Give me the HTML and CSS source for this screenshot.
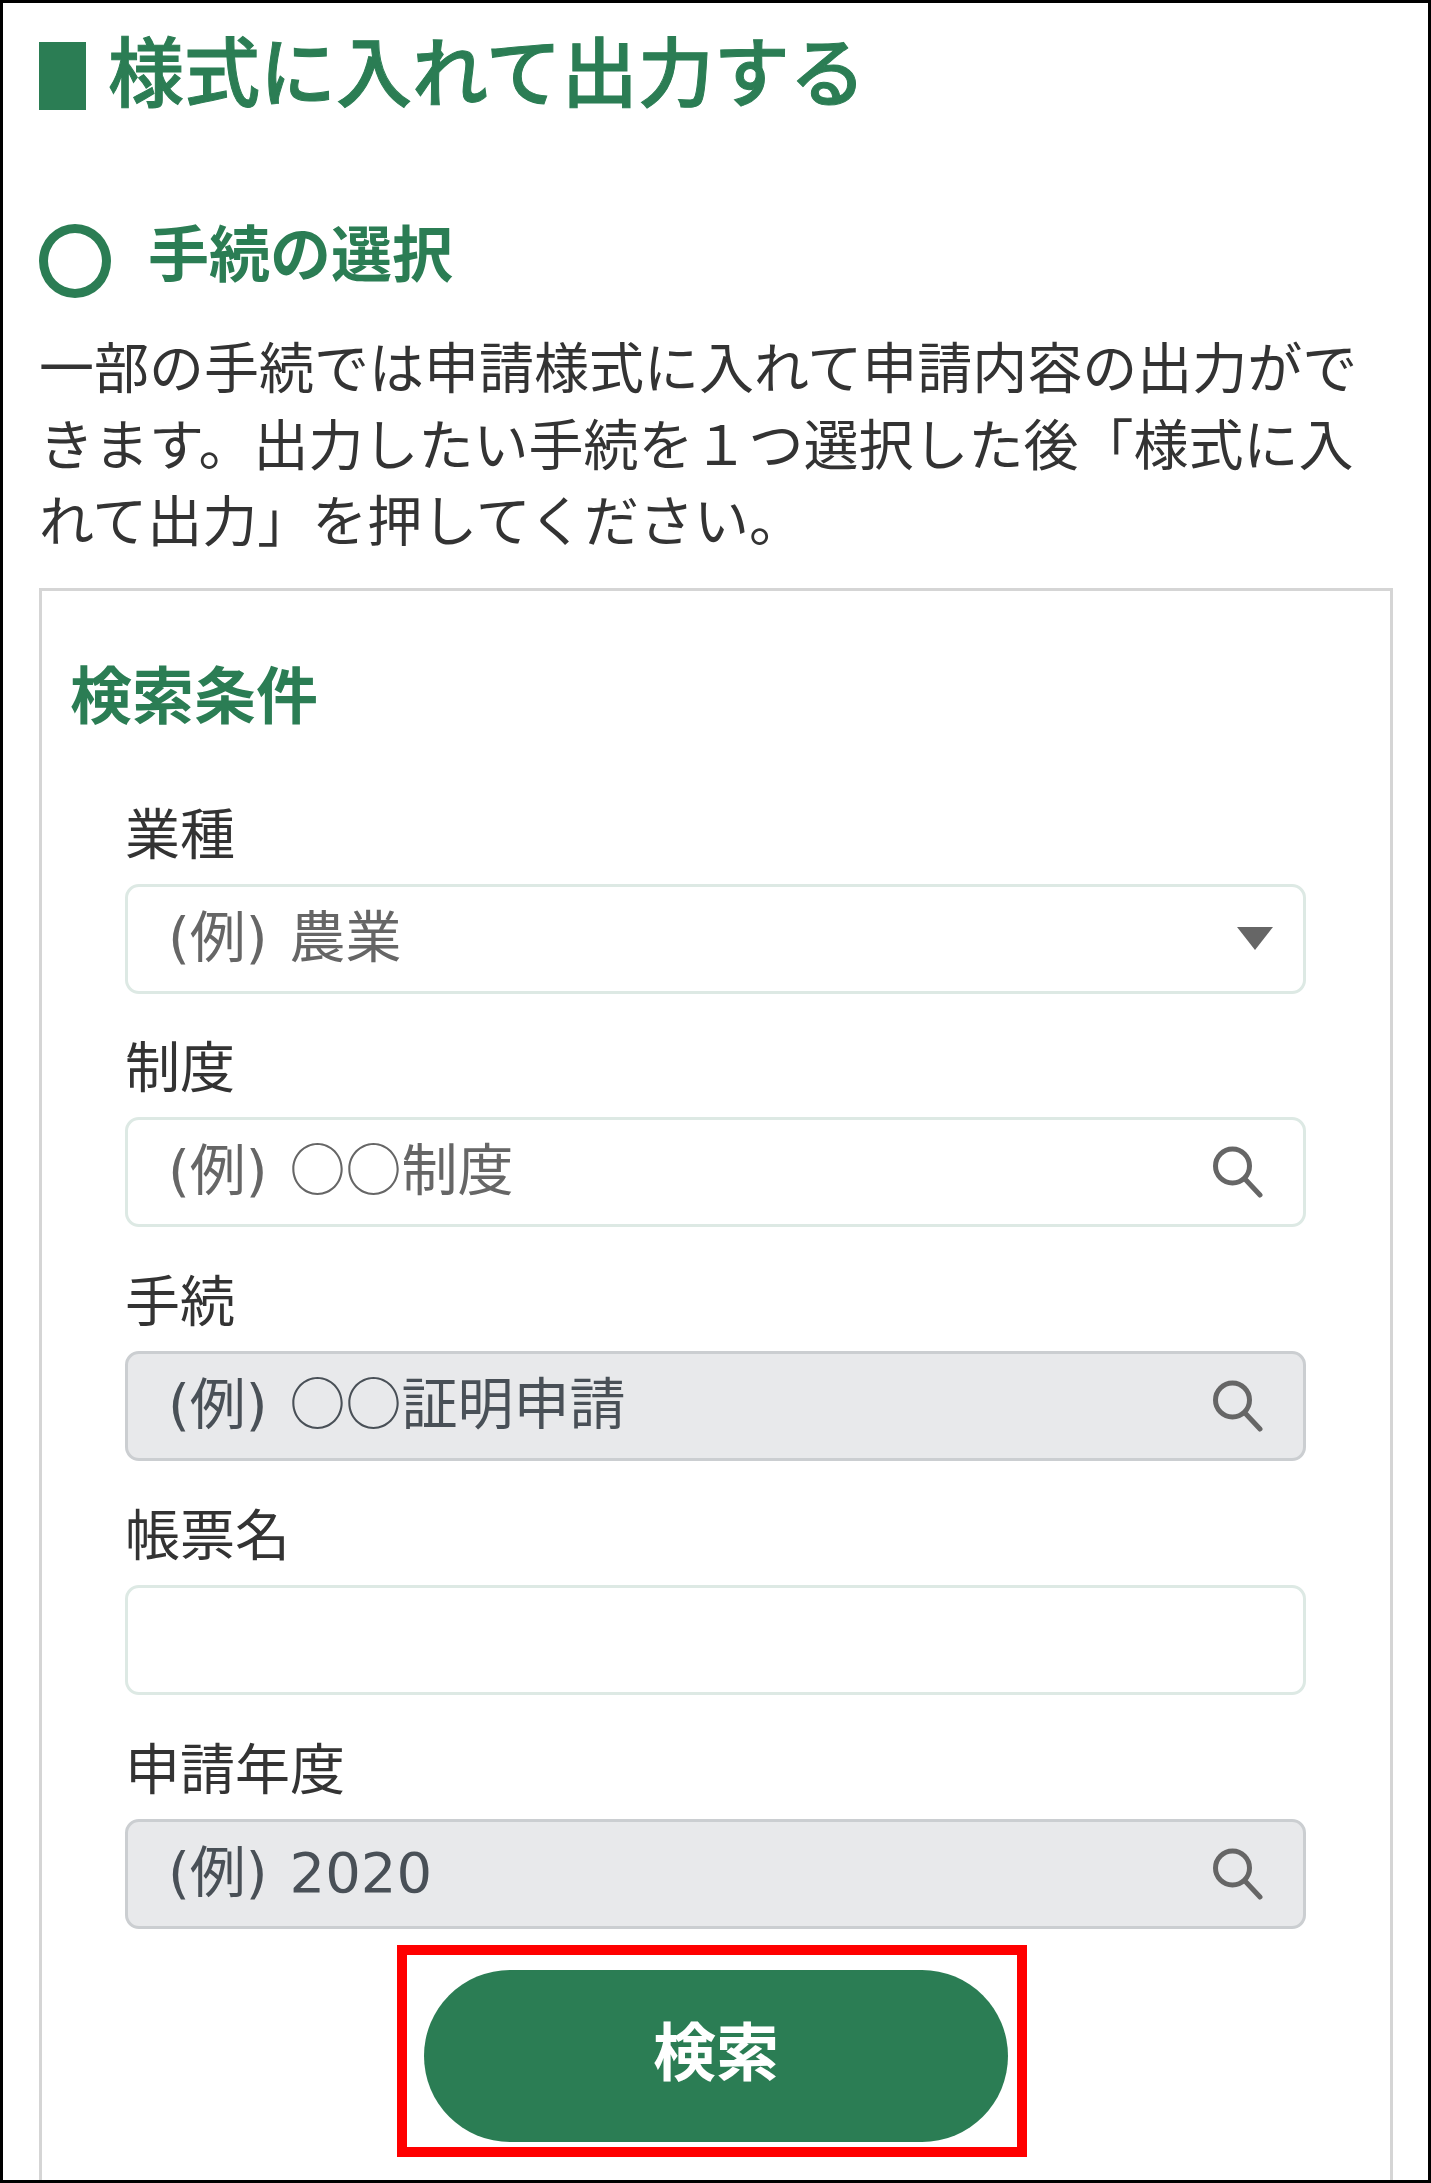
FILE: index.html
```html
<!DOCTYPE html>
<html lang="ja">
<head>
    <meta charset="UTF-8">
    <meta name="viewport" content="width=device-width, initial-scale=1.0">
    <title>様式に入れて出力する</title>
    <link rel="stylesheet" href="styles.css">
</head>
<body>

<div class="frame">
    <h1 class="page-title"><span class="title-mark"></span>様式に入れて出力する</h1>

    <h2 class="section-title"><span class="section-mark"></span>手続の選択</h2>
    <p class="lead">一部の手続では申請様式に入れて申請内容の出力ができます。出力したい手続を１つ選択した後「様式に入れて出力」を押してください。</p>

    <div class="search-box">
        <h3 class="search-title">検索条件</h3>

        <div class="form-group">
            <div class="form-label">業種</div>
            <div class="field">
                <span class="field-text">(例) 農業</span>
                <span class="arrow"></span>
            </div>
        </div>

        <div class="form-group">
            <div class="form-label">制度</div>
            <div class="field">
                <span class="field-text">(例) <span class="blank">○○</span>制度</span>
                <svg class="search-icon" viewBox="0 0 50 52"><circle cx="19.5" cy="20" r="17"/><line x1="32" y1="33" x2="47" y2="49"/></svg>
            </div>
        </div>

        <div class="form-group">
            <div class="form-label">手続</div>
            <div class="field disabled">
                <span class="field-text">(例) <span class="blank">○○</span>証明申請</span>
                <svg class="search-icon" viewBox="0 0 50 52"><circle cx="19.5" cy="20" r="17"/><line x1="32" y1="33" x2="47" y2="49"/></svg>
            </div>
        </div>

        <div class="form-group">
            <div class="form-label">帳票名</div>
            <div class="field"></div>
        </div>

        <div class="form-group">
            <div class="form-label">申請年度</div>
            <div class="field disabled">
                <span class="field-text">(例) 2020</span>
                <svg class="search-icon" viewBox="0 0 50 52"><circle cx="19.5" cy="20" r="17"/><line x1="32" y1="33" x2="47" y2="49"/></svg>
            </div>
        </div>

        <div class="button-row">
            <button class="search-button">検索<span class="highlight"></span></button>
        </div>
    </div>
</div>

</body>
</html>
```

FILE: styles.css
```css
body {
    margin: 0;
    font-family: "Open Sans", "Noto Sans CJK JP", sans-serif;
    color: #333;
    background: #fff;
}
.frame {
    box-sizing: border-box;
    height: 2183px;
    padding: 39px 35px 0 36px;
    border: 3px solid #000;
    overflow: hidden;
}
.page-title {
    display: flex;
    align-items: flex-start;
    height: 68px;
    margin: 0;
    font-size: 76px;
    line-height: 60px;
    font-weight: 500;
    -webkit-text-stroke: 1px #2b7d54;
    color: #2b7d54;
    white-space: nowrap;
}
.title-mark {
    width: 47px;
    height: 68px;
    margin-right: 22px;
    background: #2b7d54;
}
.section-title {
    display: flex;
    align-items: flex-start;
    height: 74px;
    margin: 114px 0 0;
    font-size: 61px;
    line-height: 60px;
    font-weight: 700;
    color: #2b7d54;
}
.section-mark {
    box-sizing: border-box;
    width: 72px;
    height: 74px;
    margin-right: 37px;
    border: 9px solid #2b7d54;
    border-radius: 50%;
}
.lead {
    margin: 31px 0 0;
    font-size: 55px;
    line-height: 76.6px;
}
.search-box {
    margin-top: 29px;
    height: 1700px;
    padding: 68px 28px 0;
    border: 3px solid #d5d5d5;
}
.search-title {
    margin: 0 0 60px;
    font-size: 62px;
    line-height: 72px;
    font-weight: 700;
    color: #2b7d54;
}
.form-group {
    margin: 0 56px 30.7px 55px;
}
.form-label {
    height: 76px;
    margin-bottom: 17px;
    font-size: 55px;
    line-height: 84px;
}
.field {
    box-sizing: border-box;
    display: flex;
    align-items: center;
    justify-content: space-between;
    height: 110px;
    padding: 0 30px 0 40px;
    border: 3px solid #dde9e4;
    border-radius: 14px;
    background: #fff;
    font-family: "DejaVu Sans", "Noto Sans CJK JP", sans-serif;
    font-size: 56px;
    word-spacing: 4px;
    color: #666;
}
.field.disabled {
    background: #e8e9eb;
    border-color: #cbced1;
    color: #495057;
}
.field-text {
    padding-bottom: 13px;
}
.blank {
    font-family: "Noto Sans CJK JP", sans-serif;
}
.arrow {
    width: 0;
    height: 0;
    border-left: 18px solid transparent;
    border-right: 18px solid transparent;
    border-top: 23px solid #666;
}
.search-icon {
    width: 50px;
    height: 52px;
    margin-right: 10px;
    fill: none;
    stroke: #666;
    stroke-width: 5;
    stroke-linecap: round;
}
.button-row {
    display: flex;
    justify-content: center;
    margin-top: 41px;
}
.search-button {
    position: relative;
    width: 584px;
    height: 172px;
    padding: 0 0 16px;
    border: 0;
    border-radius: 86px;
    background: #2b7d54;
    color: #fff;
    font-family: inherit;
    font-size: 63px;
    font-weight: 700;
}
.highlight {
    position: absolute;
    top: -25px;
    left: -27px;
    right: -19px;
    bottom: -15px;
    border: 10px solid #f00;
}
```
